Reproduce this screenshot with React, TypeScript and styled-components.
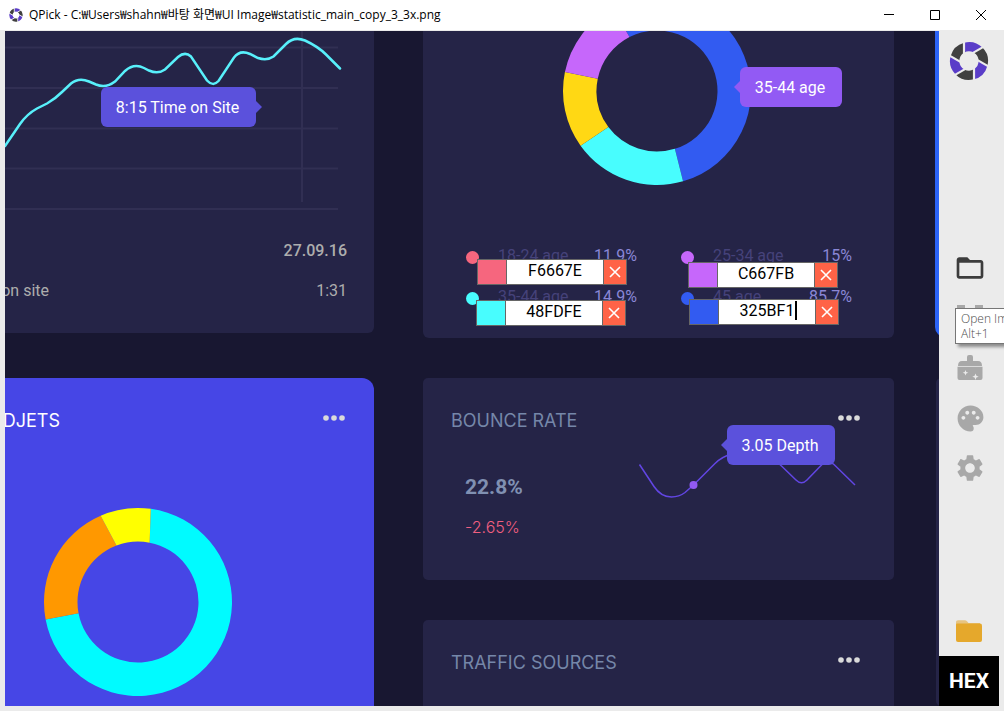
import React from "react";
import styled, { createGlobalStyle, css } from "styled-components";
import { MdFolderOpen, MdPalette, MdSettings } from "react-icons/md";

const GlobalStyle = createGlobalStyle`
  *, *::before, *::after { box-sizing: border-box; }
  body { margin: 0; background: #ebebeb; font-family: Roboto, "Liberation Sans", sans-serif; }
  button { border: 0; padding: 0; background: none; font: inherit; color: inherit; cursor: pointer; }
  h2, p { margin: 0; }
  svg { display: block; flex: none; }
`;

const Window = styled.div`
  display: flex;
  flex-direction: column;
  min-height: 100vh;
  overflow: hidden;
`;

const TitleBar = styled.header`
  display: flex;
  align-items: center;
  height: 30px;
  padding-left: 9px;
  background: #fff;
  color: #000;
`;

const WindowTitle = styled.span`
  flex: 1;
  min-width: 0;
  margin-left: 6px;
  overflow: hidden;
  white-space: nowrap;
  font: 12px/28px "Open Sans", "Noto Sans CJK KR", sans-serif;
`;

const WindowButton = styled.button`
  display: grid;
  place-items: center;
  width: 46px;
  height: 28px;
`;

const Workspace = styled.div`
  display: flex;
  flex: 1;
  padding: 1px 5px 5px;
`;

const Canvas = styled.main`
  display: flex;
  flex: 1;
  min-width: 0;
  overflow: hidden;
  background: #181731;
`;

const Column = styled.div<{ $grow: number; $gap: number }>`
  display: flex;
  flex-direction: column;
  flex: ${(p) => p.$grow} 1 0;
  min-width: 0;
  gap: ${(p) => p.$gap}px;
`;

const MiddleColumn = styled(Column)`
  margin: 0 41px 0 49px;
`;

const EdgeColumn = styled.div`
  display: flex;
  flex-direction: column;
  flex: none;
  width: 4px;
  gap: 41px;
`;

const Card = styled.section<{ $color?: string; $corners: string; $height?: number }>`
  position: relative;
  flex: ${(p) => (p.$height ? "none" : "1 1 0px")};
  min-height: ${(p) => p.$height ?? 80}px;
  border-radius: ${(p) => p.$corners};
  background: ${(p) => p.$color ?? "#252447"};
`;

const CardHeader = styled.div<{ $left: number; $right: number }>`
  display: flex;
  align-items: center;
  justify-content: space-between;
  height: 86px;
  padding: 0 ${(p) => p.$right}px 0 ${(p) => p.$left}px;
`;

const CardTitle = styled.h2<{ $color?: string }>`
  color: ${(p) => p.$color ?? "#7587a9"};
  font: 400 18px/24px Inter, sans-serif;
  white-space: nowrap;
`;

const CutTitle = styled(CardTitle)`
  display: flex;
  justify-content: flex-end;
  width: 55px;
  overflow: hidden;
`;

const MoreButton = styled.button`
  margin-bottom: 6px;
`;

const DataRow = styled.div`
  display: flex;
  justify-content: space-between;
  height: 40px;
  padding-right: 27px;
  color: #adadad;
  font-size: 16px;
  line-height: 40px;
`;

const Rows = styled.div`
  margin-top: 16px;
`;

const RowLabel = styled.span`
  display: flex;
  justify-content: flex-end;
  width: 44px;
  overflow: hidden;
  white-space: nowrap;
`;

const RowDate = styled.span`
  margin-left: auto;
  font-weight: 500;
`;

const Callout = styled.div<{ $x: number; $y: number; $w: number; $side: "left" | "right"; $color?: string }>`
  position: absolute;
  left: ${(p) => p.$x}px;
  top: ${(p) => p.$y}px;
  width: ${(p) => p.$w}px;
  height: 40px;
  padding-right: 2px;
  border-radius: 6px;
  background: ${(p) => p.$color ?? "#5b51dc"};
  color: #fff;
  font-size: 16px;
  line-height: 41px;
  text-align: center;
  white-space: nowrap;

  &::after {
    content: "";
    position: absolute;
    top: 14px;
    border: 6px solid transparent;
    ${(p) =>
      p.$side === "left"
        ? css`
            right: 100%;
            border-left-width: 0;
            border-right-color: ${p.$color ?? "#5b51dc"};
          `
        : css`
            left: 100%;
            border-right-width: 0;
            border-left-color: ${p.$color ?? "#5b51dc"};
          `}
  }
`;

const DonutBox = styled.div<{ $left: number; $top: number }>`
  padding: ${(p) => p.$top}px 0 0 ${(p) => p.$left}px;
`;

const Legend = styled.div`
  display: grid;
  grid-template-columns: 1fr 1fr;
  grid-auto-rows: 41px;
  column-gap: 44px;
  padding: 49px 42px 0 43px;
`;

const LegendItem = styled.div`
  display: flex;
  align-items: center;
  font-size: 16px;
  color: #45427a;
`;

const Dot = styled.i<{ $color: string }>`
  width: 13px;
  height: 13px;
  margin: 4px 19px 0 0;
  border-radius: 50%;
  background: ${(p) => p.$color};
`;

const Share = styled.span`
  margin-left: auto;
  color: #8a87d6;
`;

const Chip = styled.div<{ $x: number; $y: number }>`
  position: absolute;
  left: ${(p) => p.$x}px;
  top: ${(p) => p.$y}px;
  display: flex;
  width: 150px;
  height: 26px;
  border: 1px solid #666;
`;

const Swatch = styled.label<{ $color: string }>`
  width: 29px;
  border-right: 1px solid #666;
  background: ${(p) => p.$color};
`;

const HexInput = styled.input`
  flex: 1;
  min-width: 0;
  border: 0;
  border-radius: 0;
  padding: 0 0 2px;
  outline: 0;
  background: #fff;
  color: #000;
  font: 16px/22px Roboto, sans-serif;
  text-align: center;
`;

const RemoveButton = styled.button`
  display: grid;
  place-items: center;
  width: 23px;
  border-left: 1px solid #666;
  background: #ff6347;
`;

const Caret = styled.i`
  position: absolute;
  left: 105px;
  top: 1px;
  width: 2px;
  height: 19px;
  background: #000;
`;

const BounceBody = styled.div`
  display: flex;
  justify-content: space-between;
  padding: 3px 38px 0 42px;
`;

const Rate = styled.p`
  color: #8090b2;
  font-size: 21px;
  font-weight: 700;
  line-height: 40px;
`;

const Change = styled.p`
  color: #f05f80;
  font: 300 16px/40px Inter, sans-serif;
`;

const Sparkline = styled.svg`
  overflow: visible;
`;

const EdgeCard = styled.div<{ $color: string; $radius: number; $height?: number }>`
  flex: ${(p) => (p.$height ? "none" : "1")};
  height: ${(p) => (p.$height ? `${p.$height}px` : "auto")};
  width: 60px;
  margin-left: ${(p) => (p.$height ? 0 : 1)}px;
  border-radius: ${(p) => (p.$height ? 0 : p.$radius)}px 0 0 ${(p) => p.$radius}px;
  background: ${(p) => p.$color};
`;

const Sidebar = styled.aside`
  display: flex;
  flex-direction: column;
  flex: none;
  width: 60px;
  background: #ebebeb;
`;

const LogoBox = styled.div`
  display: grid;
  place-items: center;
  height: 60px;
`;

const ToolList = styled.nav`
  display: flex;
  flex-direction: column;
  margin: 152px 0 auto;
`;

const ToolButton = styled.button<{ $active?: boolean }>`
  display: grid;
  place-items: center;
  width: 60px;
  height: 50px;
  padding-left: 2px;
  color: ${(p) => (p.$active ? "#3c3c3c" : "#a8a8a8")};
`;

const FolderButton = styled(ToolButton)`
  padding-left: 0;
`;

const ToolSlot = styled.div`
  position: relative;
`;

const Tooltip = styled.div`
  position: absolute;
  left: 16px;
  top: 15px;
  width: 90px;
  height: 36px;
  padding: 2px 5px;
  border: 1px solid #767676;
  background: #fff;
  box-shadow: 3px 3px 3px rgba(0, 0, 0, 0.4);
  color: #4c4c4c;
  font: 300 12px/15px "Open Sans", sans-serif;
  white-space: nowrap;
`;

const FormatButton = styled.button`
  height: 50px;
  background: #000;
  color: #fff;
  font-size: 21px;
  font-weight: 700;
`;

const point = (r: number, deg: number) => {
  const a = (deg * Math.PI) / 180;
  return `${(r * Math.cos(a)).toFixed(2)} ${(r * Math.sin(a)).toFixed(2)}`;
};

/* Ring segment, angles in degrees clockwise from three o'clock: [outer, inner] at each end. */
const ringSegment = (outer: number, inner: number, from: number[], to: number[]) => {
  const large = to[0] - from[0] > 180 ? 1 : 0;
  return `M${point(outer, from[0])}A${outer} ${outer} 0 ${large} 1 ${point(outer, to[0])}L${point(inner, to[1])}A${inner} ${inner} 0 ${large} 0 ${point(inner, from[1])}Z`;
};

type Segment = { color: string; from: number[]; to: number[] };

const ages: Segment[] = [
  { color: "#325bf1", from: [-118, -117], to: [73.9, 72.8] },
  { color: "#48fdfe", from: [73.9, 72.8], to: [144.4, 143.5] },
  { color: "#ffd814", from: [144.4, 143.5], to: [191.6, 191.6] },
  { color: "#c667fb", from: [191.6, 191.6], to: [242, 243] },
];

const gadgets: Segment[] = [
  { color: "#00fbff", from: [-82.2, -78.9], to: [169.3, 169.3] },
  { color: "#ff9800", from: [169.3, 169.3], to: [246.6, 249.2] },
  { color: "#ffff00", from: [246.6, 249.2], to: [277.8, 281.1] },
];

const Donut = ({ segments, top }: { segments: Segment[]; top: number }) => (
  <svg width="190" height={95 + top} viewBox={`-95 ${-top} 190 ${95 + top}`} aria-hidden="true">
    {segments.map((s) => (
      <path key={s.color} d={ringSegment(94, 60.5, s.from, s.to)} fill={s.color} />
    ))}
  </svg>
);

const Aperture = ({ size, back }: { size: number; back: string }) => (
  <svg width={size} height={size} viewBox="-20 -20 40 40" aria-hidden="true">
    {[0, 1, 2, 3, 4, 5].map((i) => {
      const a = -105 + i * 60;
      return (
        <path key={i} d={ringSegment(19, 9.6, [a, a - 16], [a + 60, a + 44])} fill={i % 2 ? "#404040" : "#5a3dc8"} />
      );
    })}
    {[0, 1, 2, 3, 4, 5].map((i) => (
      <path key={i} d="M-5-20V-3" transform={`rotate(${i * 60})`} stroke={back} strokeWidth="2.2" />
    ))}
  </svg>
);

const Dots = () => (
  <MoreButton aria-label="More">
    <svg width="22" height="6" viewBox="0 0 22 6" fill="#dadada">
      <circle cx="3" cy="3" r="2.8" />
      <circle cx="11" cy="3" r="2.8" />
      <circle cx="19" cy="3" r="2.8" />
    </svg>
  </MoreButton>
);

const legend = [
  { label: "18-24 age", share: "11.9%", color: "#f6667e" },
  { label: "25-34 age", share: "15%", color: "#c667fb" },
  { label: "35-44 age", share: "14.9%", color: "#48fdfe" },
  { label: "45 age", share: "85.7%", color: "#325bf1" },
];

const chips = [
  { hex: "F6667E", x: 54, y: 228 },
  { hex: "48FDFE", x: 53, y: 269 },
  { hex: "C667FB", x: 265, y: 231 },
  { hex: "325BF1", x: 266, y: 268, editing: true },
];

export default function App() {
  return (
    <Window>
      <GlobalStyle />
      <TitleBar>
        <Aperture size={14} back="#fff" />
        <WindowTitle>QPick - C:₩Users₩shahn₩바탕 화면₩UI Image₩statistic_main_copy_3_3x.png</WindowTitle>
        <WindowButton aria-label="Minimize">
          <svg width="10" height="10" stroke="#000"><path d="M0 4.5H10" /></svg>
        </WindowButton>
        <WindowButton aria-label="Maximize">
          <svg width="10" height="10" stroke="#000" fill="none"><path d="M.5.5h9v9h-9z" /></svg>
        </WindowButton>
        <WindowButton aria-label="Close">
          <svg width="10" height="10" stroke="#000"><path d="M0 0 10 10M10 0 0 10" /></svg>
        </WindowButton>
      </TitleBar>
      <Workspace>
        <Canvas>
          <Column $grow={369} $gap={45}>
            <Card $corners="0 0 6px 0" $height={302}>
              <svg width="340" height="184" fill="none" aria-hidden="true">
                <path d="M0 16.5H333M0 57H333M0 97.5H333M0 137.5H333M0 178H333M297 0V171" stroke="#312f53" strokeWidth="2" />
                <path
                  d="M0 115 15 93Q22 83 32 77.500L42 72.500Q50 68 57 61L66 52.500Q74 46 84 50.500L91 53.500Q101 57.500 110 50.500L120 40Q129 32 139 37L144 39.500Q153 43.500 160 38.500L173 26Q180 20 186 25.500L202 49.500Q208 56 213.500 50L229 26.500Q235 18.500 245 23L253 27Q262 30 268.500 25.500L281 13Q289 5 300 9.500Q313 15.500 321 23.500L335 37.500"
                  stroke="#58f0fb"
                  strokeWidth="2.5"
                  strokeLinecap="round"
                />
              </svg>
              <Rows>
                <DataRow><RowDate>27.09.16</RowDate></DataRow>
                <DataRow><RowLabel>on site</RowLabel><span>1:31</span></DataRow>
              </Rows>
              <Callout $x={96} $y={56} $w={155} $side="right">8:15 Time on Site</Callout>
            </Card>
            <Card $color="#4646e6" $corners="0 12px 0 0">
              <CardHeader $left={0} $right={29}>
                <CutTitle $color="#fff">DJETS</CutTitle>
                <Dots />
              </CardHeader>
              <DonutBox $left={38} $top={43}><Donut segments={gadgets} top={95} /></DonutBox>
            </Card>
          </Column>

          <MiddleColumn $grow={471} $gap={40}>
            <Card $corners="0 0 6px 6px" $height={307}>
              <DonutBox $left={139} $top={0}><Donut segments={ages} top={60} /></DonutBox>
              <Legend>
                {legend.map((l) => (
                  <LegendItem key={l.label}>
                    <Dot $color={l.color} />
                    {l.label}
                    <Share>{l.share}</Share>
                  </LegendItem>
                ))}
              </Legend>
              <Callout $x={317} $y={36} $w={102} $side="left" $color="#925af4">35-44 age</Callout>
              {chips.map((c) => (
                <Chip key={c.hex} $x={c.x} $y={c.y}>
                  <Swatch $color={`#${c.hex}`} htmlFor={`hex-${c.hex}`} aria-label={`Colour ${c.hex}`} />
                  <HexInput id={`hex-${c.hex}`} defaultValue={c.hex} />
                  {c.editing && <Caret />}
                  <RemoveButton aria-label="Remove">
                    <svg width="12" height="12" stroke="#fff" strokeWidth="1.6"><path d="M1 1 11 11M11 1 1 11" /></svg>
                  </RemoveButton>
                </Chip>
              ))}
            </Card>
            <Card $corners="5px" $height={202}>
              <CardHeader $left={28} $right={34}>
                <CardTitle>BOUNCE RATE</CardTitle>
                <Dots />
              </CardHeader>
              <BounceBody>
                <div>
                  <Rate>22.8%</Rate>
                  <Change>-2.65%</Change>
                </div>
                <Sparkline width="218" height="44" viewBox="0 1 218 44" fill="none" aria-hidden="true">
                  <path
                    d="M1.500-1.500 16 20.500Q23 31 33.500 31Q41 31 47 26.500L55.500 19 77-2.500Q84-9.500 94-12Q122-22 143-.500L158 14Q163.500 19.500 169 14L183-.500Q189-8 196-1.500L217 19"
                    stroke="#6246e4"
                    strokeWidth="1.5"
                  />
                  <circle cx="55.500" cy="19" r="4" fill="#925af4" />
                </Sparkline>
              </BounceBody>
              <Callout $x={304} $y={47} $w={108} $side="left">3.05 Depth</Callout>
            </Card>
            <Card $corners="5px 5px 0 0">
              <CardHeader $left={28} $right={34}>
                <CardTitle>TRAFFIC SOURCES</CardTitle>
                <Dots />
              </CardHeader>
            </Card>
          </MiddleColumn>

          <EdgeColumn>
            <EdgeCard $color="#2b63f6" $radius={10} $height={306} />
            <EdgeCard $color="#252447" $radius={5} />
          </EdgeColumn>
        </Canvas>

        <Sidebar>
          <LogoBox><Aperture size={40} back="#ebebeb" /></LogoBox>
          <ToolList>
            <ToolButton $active aria-label="Open image"><MdFolderOpen size={32} /></ToolButton>
            <ToolSlot>
              <ToolButton aria-label="Capture">
                <svg width="26" height="26" fill="none" stroke="currentColor" strokeWidth="3">
                  <path d="M0 1.500H8M18 1.500H26M0 24.500H8M18 24.500H26M1.500 0V8M24.500 0V8M1.500 18V26M24.500 18V26" />
                </svg>
              </ToolButton>
              <Tooltip role="tooltip">Open Im<br />Alt+1</Tooltip>
            </ToolSlot>
            <ToolButton aria-label="Clear">
              <svg width="26" height="26" viewBox="0 0 26 26" fill="currentColor">
                <path d="M10 6V2q0-2 2-2h2q2 0 2 2v4h5q4 0 4 5H1q0-5 4-5z" />
                <path
                  fillRule="evenodd"
                  d="M.500 11.800h25V23q0 2-2 2h-21q-2 0-2-2zM8.500 15l-.8 2-2 .8 2 .8.8 2 .8-2 2-.8-2-.8zM18.500 18.500l-.9 2.300-2.300.9 2.300.9.900 2.300.9-2.300 2.300-.9-2.300-.9z"
                />
              </svg>
            </ToolButton>
            <ToolButton aria-label="Palette"><MdPalette size={31} /></ToolButton>
            <ToolButton aria-label="Settings"><MdSettings size={32} /></ToolButton>
          </ToolList>
          <FolderButton aria-label="Saved folder">
            <svg width="26" height="22" viewBox="0 0 26 22">
              <path d="M0 4V2Q0 .300 2 .300h7q1 0 2 1L12.500 3H24v4H0z" fill="#e7c481" />
              <path d="M0 4.500q0-1 1-1H24q2 0 2 2V20q0 2-2 2H2q-2 0-2-2z" fill="#e5a82c" />
            </svg>
          </FolderButton>
          <FormatButton>HEX</FormatButton>
        </Sidebar>
      </Workspace>
    </Window>
  );
}
